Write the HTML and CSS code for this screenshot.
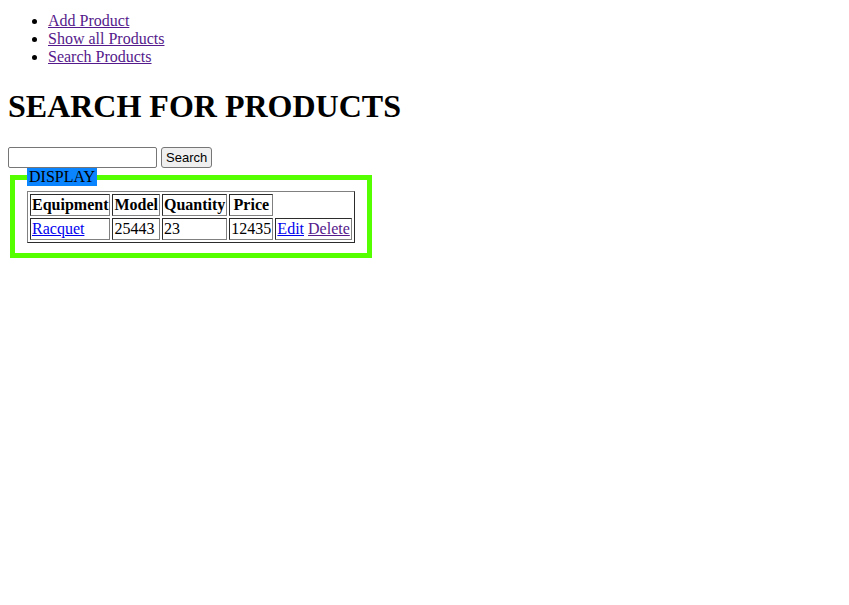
FILE: index.html
```html
<!DOCTYPE html>
<html>
<head>
<meta charset="utf-8">
<link rel="stylesheet" href="styles.css">
</head>
<body class="page">
<ul class="nav">
  <li><a class="visited" href="#a">Add Product</a></li>
  <li><a class="visited" href="#s">Show all Products</a></li>
  <li><a class="visited" href="#q">Search Products</a></li>
</ul>
<h1 class="title">SEARCH FOR PRODUCTS</h1>
<form class="search">
  <input class="search-input" type="text">
  <button class="search-btn" type="button">Search</button>
</form>
<fieldset class="display">
  <legend class="display-legend">DISPLAY</legend>
  <table class="products" border="1">
    <tr>
      <th>Equipment</th>
      <th>Model</th>
      <th>Quantity</th>
      <th>Price</th>
    </tr>
    <tr>
      <td><a class="link" href="#r">Racquet</a></td>
      <td>25443</td>
      <td>23</td>
      <td>12435</td>
      <td><a class="link" href="#e">Edit</a> <a class="visited" href="#d">Delete</a></td>
    </tr>
  </table>
</fieldset>
</body>
</html>
```
FILE: styles.css
```css
.page {
  margin: 12px 8px 8px;
  font-family: "Liberation Serif", "Times New Roman", serif;
  font-size: 16px;
  color: #000;
  background: #fff;
}
.nav {
  margin: 0 0 16px;
  padding-left: 40px;
}
.visited { color: #551a8b; }
.link { color: #0000ee; }
.title {
  font-size: 32px;
  font-weight: bold;
  margin: 22px 0 22px;
}
.search {
  margin: 0;
}
.search-input {
  width: 143px;
  height: 17px;
  padding: 1px 2px;
  border: 1px solid #767676;
  border-radius: 2px;
  font-family: "Liberation Sans", Arial, sans-serif;
  font-size: 13px;
  vertical-align: middle;
}
.search-btn {
  font-family: "Liberation Sans", Arial, sans-serif;
  font-size: 13px;
  padding: 1px 4px;
  height: 21px;
  border: 1px solid #767676;
  border-radius: 3px;
  background: #efefef;
  vertical-align: middle;
}
.display {
  margin: 0 2px;
  border: 5px solid #55ff00;
  padding: 5px 12px 10px;
  width: max-content;
}
.display-legend {
  background: #0a84ff;
  padding: 0 2px;
}
.products {
  border-spacing: 2px;
}
.products th, .products td {
  padding: 1px;
}
```
